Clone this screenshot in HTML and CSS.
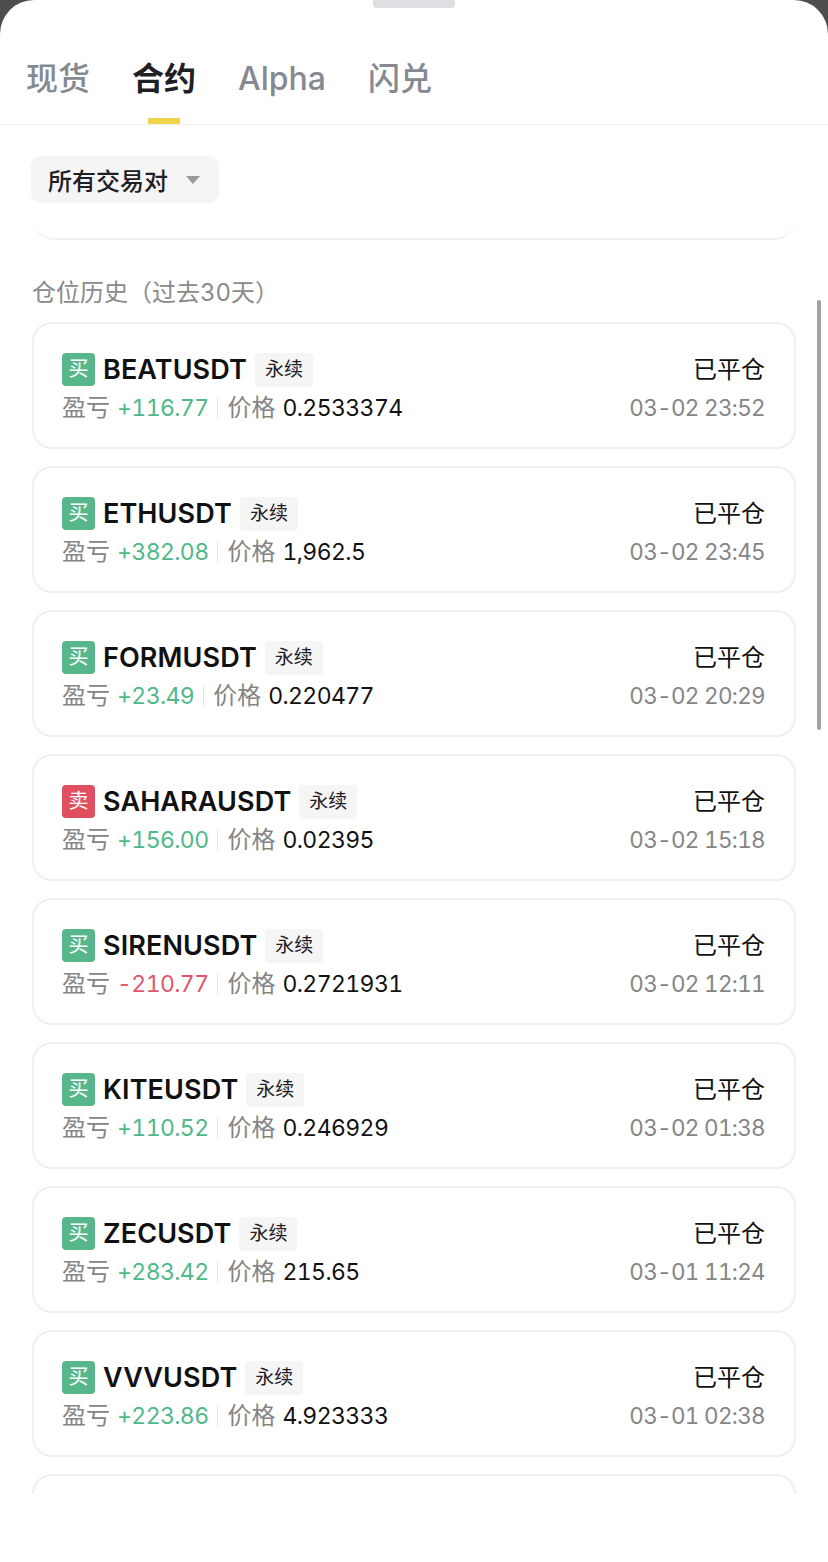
FILE: index.html
```html
<!DOCTYPE html>
<html lang="zh-CN">
<head>
<meta charset="utf-8">
<title>仓位历史</title>
<link rel="stylesheet" href="styles.css">
</head>
<body>
<div class="sheet">
  <div class="handle"></div>
  <nav class="tabs">
    <div class="tab">现货</div>
    <div class="tab active">合约</div>
    <div class="tab">Alpha</div>
    <div class="tab">闪兑</div>
  </nav>
  <div class="filter-row">
    <div class="filter">所有交易对<span class="caret"></span></div>
  </div>
  <div class="peek"></div>
  <div class="section-title">仓位历史（过去30天）</div>
  <div class="list">
    <div class="card">
      <div class="left">
        <div class="title"><span class="side buy">买</span><span class="sym">BEATUSDT</span><span class="tag">永续</span></div>
        <div class="info"><span class="lbl">盈亏</span><span class="pnl up">+116.77</span><span class="sep"></span><span class="lbl">价格</span><span class="price">0.2533374</span></div>
      </div>
      <div class="right"><div class="status">已平仓</div><div class="time">03-02 23:52</div></div>
    </div>
    <div class="card">
      <div class="left">
        <div class="title"><span class="side buy">买</span><span class="sym">ETHUSDT</span><span class="tag">永续</span></div>
        <div class="info"><span class="lbl">盈亏</span><span class="pnl up">+382.08</span><span class="sep"></span><span class="lbl">价格</span><span class="price">1,962.5</span></div>
      </div>
      <div class="right"><div class="status">已平仓</div><div class="time">03-02 23:45</div></div>
    </div>
    <div class="card">
      <div class="left">
        <div class="title"><span class="side buy">买</span><span class="sym">FORMUSDT</span><span class="tag">永续</span></div>
        <div class="info"><span class="lbl">盈亏</span><span class="pnl up">+23.49</span><span class="sep"></span><span class="lbl">价格</span><span class="price">0.220477</span></div>
      </div>
      <div class="right"><div class="status">已平仓</div><div class="time">03-02 20:29</div></div>
    </div>
    <div class="card">
      <div class="left">
        <div class="title"><span class="side sell">卖</span><span class="sym">SAHARAUSDT</span><span class="tag">永续</span></div>
        <div class="info"><span class="lbl">盈亏</span><span class="pnl up">+156.00</span><span class="sep"></span><span class="lbl">价格</span><span class="price">0.02395</span></div>
      </div>
      <div class="right"><div class="status">已平仓</div><div class="time">03-02 15:18</div></div>
    </div>
    <div class="card">
      <div class="left">
        <div class="title"><span class="side buy">买</span><span class="sym">SIRENUSDT</span><span class="tag">永续</span></div>
        <div class="info"><span class="lbl">盈亏</span><span class="pnl down">-210.77</span><span class="sep"></span><span class="lbl">价格</span><span class="price">0.2721931</span></div>
      </div>
      <div class="right"><div class="status">已平仓</div><div class="time">03-02 12:11</div></div>
    </div>
    <div class="card">
      <div class="left">
        <div class="title"><span class="side buy">买</span><span class="sym">KITEUSDT</span><span class="tag">永续</span></div>
        <div class="info"><span class="lbl">盈亏</span><span class="pnl up">+110.52</span><span class="sep"></span><span class="lbl">价格</span><span class="price">0.246929</span></div>
      </div>
      <div class="right"><div class="status">已平仓</div><div class="time">03-02 01:38</div></div>
    </div>
    <div class="card">
      <div class="left">
        <div class="title"><span class="side buy">买</span><span class="sym">ZECUSDT</span><span class="tag">永续</span></div>
        <div class="info"><span class="lbl">盈亏</span><span class="pnl up">+283.42</span><span class="sep"></span><span class="lbl">价格</span><span class="price">215.65</span></div>
      </div>
      <div class="right"><div class="status">已平仓</div><div class="time">03-01 11:24</div></div>
    </div>
    <div class="card">
      <div class="left">
        <div class="title"><span class="side buy">买</span><span class="sym">VVVUSDT</span><span class="tag">永续</span></div>
        <div class="info"><span class="lbl">盈亏</span><span class="pnl up">+223.86</span><span class="sep"></span><span class="lbl">价格</span><span class="price">4.923333</span></div>
      </div>
      <div class="right"><div class="status">已平仓</div><div class="time">03-01 02:38</div></div>
    </div>
    <div class="card"></div>
  </div>
  <div class="scrollbar"></div>
</div>
</body>
</html>
```
FILE: styles.css
```css
* { box-sizing: border-box; }
html, body { margin: 0; padding: 0; }
body {
  background: #4d4d4d;
  font-family: Inter, "Noto Sans CJK SC", sans-serif;
  font-variant-numeric: tabular-nums;
  color: #1e2026;
}
.sheet {
  position: relative;
  background: #fff;
  border-radius: 34px 34px 0 0;
  height: 1562px;
  overflow: hidden;
}
.handle {
  width: 82px;
  height: 8px;
  margin: 0 auto;
  background: #dedfe3;
  border-radius: 0 0 4px 4px;
}
.tabs {
  display: flex;
  gap: 42px;
  padding: 49px 0 0 26px;
  border-bottom: 1px solid #efefef;
  height: 117px;
}
.tab {
  font-size: 32px;
  line-height: 44px;
  font-weight: 500;
  color: #858a92;
  position: relative;
  height: 67px;
}
.tab.active { color: #1e2026; font-weight: 600; }
.tab.active::after {
  content: "";
  position: absolute;
  left: 50%;
  bottom: 0;
  width: 32px;
  height: 6px;
  margin-left: -16px;
  background: #f0d44a;
}
.filter-row { padding: 31px 0 0 31px; }
.filter {
  display: inline-flex;
  align-items: center;
  height: 47px;
  padding: 0 17px 0 17px;
  background: #f5f5f5;
  border-radius: 10px;
  font-size: 24px;
  font-weight: 500;
  color: #1e2026;
}
.caret {
  width: 0; height: 0;
  margin-left: 18px;
  margin-right: 2px;
  border-left: 7px solid transparent;
  border-right: 7px solid transparent;
  border-top: 8px solid #9a9a9a;
}
.peek {
  margin: 0 32px;
  height: 37px;
  border-bottom: 2px solid #f0f0f0;
  border-radius: 0 0 22px 22px;
}
.section-title {
  padding: 37px 0 0 32px;
  font-size: 24px;
  line-height: 32px;
  color: #8a8a8a;
  height: 82px;
}
.list {
  display: flex;
  flex-direction: column;
  gap: 17px;
  padding: 0 32px;
  height: 1172px;
  overflow: hidden;
}
.card {
  flex: 0 0 127px;
  border: 2px solid #efefef;
  border-radius: 20px;
  display: flex;
  justify-content: space-between;
  padding: 29px 29px 0 28px;
}
.title {
  display: flex;
  align-items: center;
  height: 33px;
}
.side {
  width: 33px;
  height: 33px;
  border-radius: 4px;
  color: #fff;
  font-size: 20px;
  line-height: 33px;
  text-align: center;
}
.side.buy { background: #58b78a; }
.side.sell { background: #e04f5f; }
.sym {
  margin-left: 8px;
  font-size: 27px;
  font-weight: 600;
  letter-spacing: 0.1px;
  color: #111;
}
.tag {
  margin-left: 8px;
  height: 34px;
  line-height: 34px;
  padding: 0 10px;
  background: #f5f5f5;
  border-radius: 4px;
  font-size: 19px;
  color: #1e2026;
}
.info {
  display: flex;
  align-items: center;
  margin-top: 7px;
  font-size: 23px;
  line-height: 30px;
}
.lbl { color: #858585; font-size: 24px; }
.pnl { margin-left: 7px; letter-spacing: -0.6px; }
.pnl.up { color: #4fb889; }
.pnl.down { color: #e2566b; }
.sep {
  width: 1px;
  height: 22px;
  background: #e5e5e5;
  margin: 0 9px;
}
.price { margin-left: 7px; color: #111; letter-spacing: -0.6px; }
.right {
  display: flex;
  flex-direction: column;
  align-items: flex-end;
}
.status {
  font-size: 24px;
  line-height: 33px;
  color: #111;
}
.time {
  margin-top: 7px;
  font-size: 22.5px;
  line-height: 30px;
  letter-spacing: -0.7px;
  color: #858585;
}
.scrollbar {
  position: absolute;
  left: 817px;
  top: 300px;
  width: 4px;
  height: 430px;
  border-radius: 2px;
  background: #a2a2a2;
}
```
